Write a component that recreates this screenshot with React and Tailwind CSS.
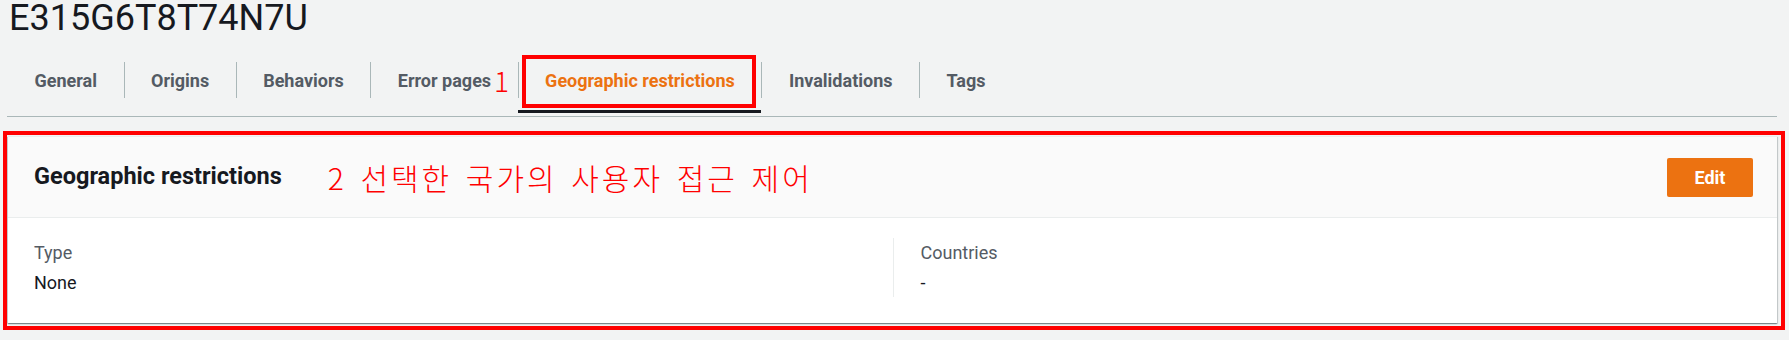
const tabs = ['General', 'Origins', 'Behaviors', 'Error pages', 'Geographic restrictions', 'Invalidations', 'Tags'];
const activeTab = 'Geographic restrictions';

function Tab({ label, first }) {
  const isActive = label === activeTab;
  return (
    <li className="relative flex flex-col">
      <div
        className={`flex h-[36px] items-center px-[26.5px] text-[18px] font-bold ${
          first ? '' : 'border-l border-[#aab7b8]'
        } ${isActive ? 'text-[#ec7211]' : 'text-[#545b64]'}`}
      >
        <span className="relative whitespace-nowrap">
          {label}
          {label === 'Error pages' && (
            <span className="absolute left-full top-1/2 ml-[3px] -translate-y-1/2 font-['Noto_Sans_CJK_KR',sans-serif] text-[28px] font-light leading-none text-[#ff0000]">
              1
            </span>
          )}
        </span>
      </div>
      <div className={`mt-[12px] h-[3px] ${isActive ? 'bg-[#16191f]' : ''}`} />
      {isActive && (
        <div className="pointer-events-none absolute left-[4px] right-[5px] top-[-7px] h-[53px] border-4 border-[#ff0000]" />
      )}
    </li>
  );
}

export default function App() {
  return (
    <div className="min-h-screen bg-[#f2f3f3] font-['Roboto',sans-serif] text-[#16191f]">
      <h1 className="pl-[9px] text-[36px] font-normal leading-[36px]">E315G6T8T74N7U</h1>

      <div className="ml-[7px] mr-[12px] mt-[26px] border-b border-[#aab7b8] pb-[3px]">
        <ul className="flex pl-[1px]">
          {tabs.map((t, i) => (
            <Tab key={t} label={t} first={i === 0} />
          ))}
        </ul>
      </div>

      <div className="relative ml-[8px] mr-[12px] mt-[19px] border-t border-[#eaeded] bg-white shadow-[0_1px_1px_0_rgba(0,28,36,0.3),1px_1px_1px_0_rgba(0,28,36,0.15),-1px_1px_1px_0_rgba(0,28,36,0.15)]">
        <div className="flex h-[81px] items-center border-b border-[#eaeded] bg-[#fafafa] pl-[26px] pr-[24px]">
          <h2 className="text-[23.5px] font-bold leading-none">Geographic restrictions</h2>
          <span className="ml-[46px] font-['Noto_Sans_CJK_KR',sans-serif] text-[30px] font-light leading-none tracking-[3px] text-[#ff0000] [word-spacing:4px]">
            2 선택한 국가의 사용자 접근 제어
          </span>
          <button className="ml-auto h-[39px] w-[86px] rounded-[2px] bg-[#ec7211] text-[18px] font-bold text-white">
            Edit
          </button>
        </div>
        <div className="grid grid-cols-2 px-[26px] pb-[26px] pt-[20px] text-[18px] leading-[29.5px]">
          <div>
            <div className="text-[#545b64]">Type</div>
            <div>None</div>
          </div>
          <div className="border-l border-[#eaeded] pl-[27px]">
            <div className="text-[#545b64]">Countries</div>
            <div>-</div>
          </div>
        </div>
        <div className="pointer-events-none absolute -bottom-[7px] -left-[5px] -right-[8px] -top-[6px] border-4 border-[#ff0000]" />
      </div>
    </div>
  );
}
